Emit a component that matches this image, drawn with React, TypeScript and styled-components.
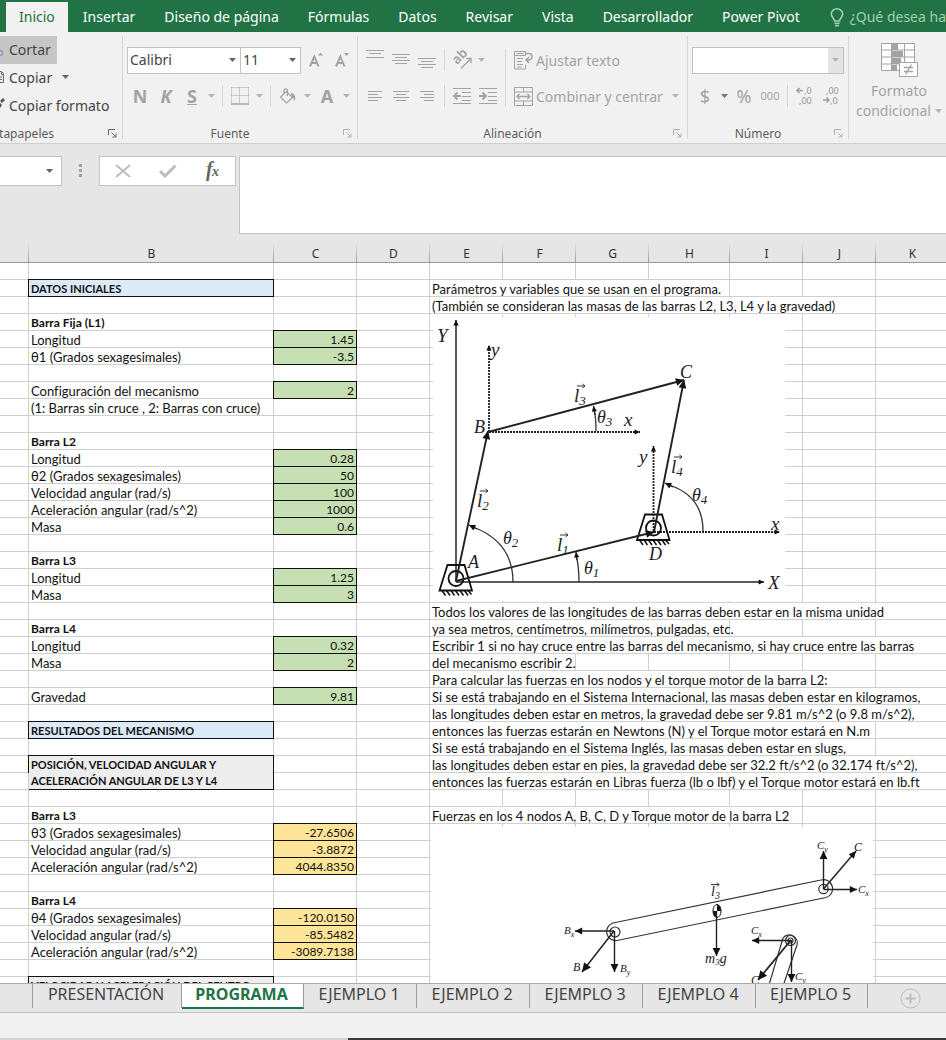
import React from "react";
import styled, { createGlobalStyle, css } from "styled-components";

const GlobalStyle = createGlobalStyle`
  *, *::before, *::after { box-sizing: border-box; }
  html, body { margin: 0; padding: 0; }
  body { background: #e6e6e6; font-family: "Noto Sans", "Open Sans", sans-serif; }
  button, input, select { font: inherit; color: inherit; margin: 0; }
`;

const GREEN = "#217346";
const OFF = "#a3a3a3";
const INK = "#444";

const App = styled.div`
  display: flex;
  flex-direction: column;
  height: 100vh;
  overflow: hidden;
`;

/* ---------- Ribbon tabs ---------- */

const TabStrip = styled.nav`
  display: flex;
  align-items: flex-end;
  gap: 1px;
  height: 32px;
  padding-left: 6px;
  background: ${GREEN};
  overflow: hidden;
  flex: none;
`;

const RibbonTab = styled.button<{ $active?: boolean }>`
  flex: none;
  height: 30px;
  padding: 0 ${(p) => (p.$active ? 13 : 14)}px;
  border: 0;
  font-size: 14px;
  line-height: 28px;
  white-space: nowrap;
  background: ${(p) => (p.$active ? "#f1f1f1" : "transparent")};
  color: ${(p) => (p.$active ? GREEN : "#fff")};
`;

const TellMe = styled.button`
  display: flex;
  align-items: center;
  gap: 6px;
  flex: none;
  height: 30px;
  padding: 0 0 0 15px;
  border: 0;
  background: transparent;
  color: #a3cdb4;
  font-size: 14px;
  line-height: 28px;
  white-space: nowrap;
`;

/* ---------- Ribbon ---------- */

const Ribbon = styled.div`
  display: grid;
  grid-template-columns: 123px 235px 330px 161px minmax(97px, 1fr);
  height: 112px;
  flex: none;
  background: #f1f1f1;
  border-bottom: 1px solid #cfcfcf;
  color: ${INK};
  overflow: hidden;
`;

const Group = styled.section`
  display: flex;
  flex-direction: column;
  position: relative;
  min-width: 0;
  &:not(:last-child)::after {
    content: "";
    position: absolute;
    right: 0;
    top: 4px;
    bottom: 4px;
    width: 1px;
    background: #d5d5d5;
  }
`;

const GroupBody = styled.div<{ $tight?: boolean }>`
  flex: 1;
  padding-top: ${(p) => (p.$tight ? 4 : 10)}px;
`;

const GroupFooter = styled.div`
  display: grid;
  grid-template-columns: 1fr 9px;
  column-gap: 6px;
  align-items: center;
  height: 19px;
  padding-right: 6px;
  font-size: 12px;
  line-height: 16px;
  text-align: center;
  color: #5c5c5c;
`;

const ClippedTitle = styled.div`
  display: flex;
  justify-content: flex-end;
  width: 54px;
  overflow: hidden;
`;

const Launcher = styled.button<{ $on?: boolean }>`
  display: flex;
  padding: 0;
  border: 0;
  background: none;
  color: ${(p) => (p.$on ? "#666" : "#b0b0b0")};
`;

const ClipButton = styled.button<{ $hot?: boolean }>`
  display: flex;
  align-items: center;
  width: ${(p) => (p.$hot ? "57px" : "118px")};
  height: 28px;
  padding: 0 0 2px;
  gap: 4px;
  border: 0;
  background: ${(p) => (p.$hot ? "#c6c6c6" : "transparent")};
  color: ${INK};
  font-size: 14px;
  white-space: nowrap;
  svg { flex: none; }
  span { margin-right: 6px; }
`;

const Row = styled.div`
  display: flex;
  align-items: center;
  height: 36px;
  padding-left: 4px;
`;

const SelectBox = styled.label<{ $w: number; $off?: boolean }>`
  display: grid;
  grid-template-columns: 1fr 15px;
  align-items: center;
  width: ${(p) => p.$w}px;
  height: 27px;
  border: 1px solid #c3c3c3;
  background: #fff;
  & + & { margin-left: -1px; }
  select {
    grid-area: 1 / 1 / 2 / 3;
    appearance: none;
    width: 100%;
    height: 25px;
    padding: 0 2px 2px;
    border: 0;
    background: transparent;
    font-size: 14px;
    color: ${INK};
    opacity: 1;
  }
  span {
    grid-area: 1 / 2 / 2 / 3;
    display: flex;
    align-items: center;
    justify-content: center;
    height: 25px;
    pointer-events: none;
    background: ${(p) => (p.$off ? "#e4e4e4" : "transparent")};
  }
`;

const Tool = styled.button<{ $w?: number; $small?: boolean }>`
  display: flex;
  align-items: center;
  justify-content: center;
  flex: none;
  width: ${(p) => p.$w ?? 26}px;
  height: 26px;
  padding: 0;
  border: 0;
  background: none;
  color: ${OFF};
  font-size: ${(p) => (p.$small ? 11 : 18)}px;
  line-height: 24px;
`;

const WideTool = styled.button`
  display: flex;
  align-items: center;
  gap: 3px;
  height: 36px;
  padding: 0;
  border: 0;
  background: none;
  color: ${OFF};
  font-size: 14px;
  white-space: nowrap;
`;

const Rule = styled.i<{ $tall?: boolean }>`
  flex: none;
  width: 1px;
  height: ${(p) => (p.$tall ? 58 : 22)}px;
  margin: 0 4px;
  background: #d5d5d5;
`;

const Split = styled.div`
  display: flex;
  align-items: center;
`;

const BigTool = styled.button`
  display: flex;
  flex-direction: column;
  align-items: center;
  width: 100px;
  padding: 0;
  border: 0;
  background: none;
  color: ${OFF};
  font-size: 14px;
  line-height: 20px;
  svg { flex: none; }
  > svg { margin-bottom: 3px; }
  span { display: flex; align-items: center; gap: 4px; white-space: nowrap; }
`;

/* ---------- Formula bar ---------- */

const FormulaBar = styled.div`
  display: flex;
  align-items: flex-start;
  flex: none;
  height: 97px;
  padding-top: 12px;
`;

const NameBox = styled.label`
  display: flex;
  align-items: center;
  width: 62px;
  height: 30px;
  padding-right: 8px;
  border: 1px solid #c3c3c3;
  border-left: 0;
  background: #fff;
  input { flex: 1; min-width: 0; border: 0; padding: 0; background: none; }
`;

const Grip = styled.div`
  display: flex;
  justify-content: center;
  align-items: center;
  width: 37px;
  height: 30px;
`;

const FxBox = styled.div`
  display: flex;
  align-items: center;
  justify-content: space-around;
  width: 137px;
  height: 30px;
  border: 1px solid #c3c3c3;
  background: #fff;
`;

const FormulaInput = styled.textarea`
  flex: 1;
  min-width: 0;
  height: 78px;
  margin-left: 3px;
  padding: 4px;
  border: 1px solid #c3c3c3;
  border-right: 0;
  background: #fff;
  resize: none;
`;

/* ---------- Worksheet ---------- */

const SheetView = styled.main`
  flex: 1;
  min-height: 0;
  overflow: hidden;
  background: #fff;
`;

const Sheet = styled.table`
  width: 100%;
  min-width: 949px;
  table-layout: fixed;
  border-collapse: separate;
  border-spacing: 0;
  font-family: Lato, "Noto Sans", sans-serif;
  font-size: 13px;
  font-variant-ligatures: none;
  line-height: 14px;
  color: #111;
`;

const ColumnHead = styled.th`
  height: 22px;
  padding: 5px 0 0;
  border-bottom: 1px solid #9b9b9b;
  background: linear-gradient(to bottom, #e6e6e6 10%, #9b9b9b) right / 1px 100% no-repeat #e6e6e6;
  font: 12px/16px "Noto Sans", sans-serif;
  color: #333;
`;

const Cell = styled.td`
  height: 17px;
  padding: 2px 2px 0;
  border-right: 1px solid #d0d0d0;
  border-bottom: 1px solid #d0d0d0;
  white-space: nowrap;
`;

const boxed = css`
  border-color: #111;
  box-shadow: 0 -1px 0 #111, -1px 0 0 #111, -1px -1px 0 #111;
`;

const HeadingCell = styled(Cell)<{ $fill: string; $double: boolean }>`
  ${boxed}
  background: ${(p) => p.$fill};
  font-size: 11px;
  font-weight: 700;
  white-space: pre;
  ${(p) => p.$double && "padding-top: 1px; line-height: 16px;"}
`;

const LabelCell = styled(Cell)<{ $bold?: boolean }>`
  ${(p) => p.$bold && "font-weight: 700; font-size: 12px;"}
`;

const ValueCell = styled(Cell)<{ $fill: string }>`
  ${boxed}
  background: ${(p) => p.$fill};
  font-size: 12px;
  text-align: right;
`;

const AnchorCell = styled(Cell)`
  position: relative;
`;

const Picture = styled.svg<{ $left: number }>`
  position: absolute;
  z-index: 1;
  top: 3px;
  left: ${(p) => p.$left}px;
  background: #fff;
  font-family: "Liberation Serif", serif;
  font-style: italic;
  text { fill: #222; }
`;

/* ---------- Sheet tabs and status bar ---------- */

const SheetTabs = styled.nav`
  display: flex;
  align-items: flex-start;
  flex: none;
  height: 30px;
  padding-left: 32px;
  border-top: 1px solid #ababab;
  border-bottom: 1px solid #c3c3c3;
  background: #e6e6e6;
`;

const SheetTab = styled.button<{ $active?: boolean; $w: number }>`
  flex: none;
  width: ${(p) => p.$w}px;
  height: 24px;
  padding: 0 2px 4px 0;
  border: 0;
  border-right: 1px solid #9b9b9b;
  font-size: 16px;
  line-height: 20px;
  text-align: center;
  color: ${INK};
  background: transparent;
  &:first-child { border-left: 1px solid #9b9b9b; }
  ${(p) =>
    p.$active &&
    css`
      height: 25px;
      padding-bottom: 3px;
      background: #fff;
      color: ${GREEN};
      font-weight: 700;
      border-bottom: 2px solid ${GREEN};
    `}
`;

const AddSheet = styled.button`
  display: flex;
  margin: 4px 0 0 32px;
  padding: 0;
  border: 0;
  background: none;
`;

const StatusBar = styled.footer`
  display: flex;
  align-items: flex-end;
  flex: none;
  height: 27px;
  background: #f1f1f1;
  &::before { content: ""; width: 348px; height: 2px; background: #cdd3d6; }
  &::after { content: ""; flex: 1; height: 2px; background: #3a3a3a; }
`;

/* ---------- Icons ---------- */

const Caret = ({ color = "#b5b5b5" }: { color?: string }) => (
  <svg width="7" height="4" viewBox="0 0 7 4" aria-hidden="true">
    <path d="M0 0h7L3.500 4z" fill={color} />
  </svg>
);

const Lines = ({ rows }: { rows: [number, number, number][] }) => (
  <svg width="20" height="22" viewBox="0 0 20 22" stroke={OFF} aria-hidden="true">
    {rows.map(([x1, x2, y]) => (
      <path key={y} d={`M${x1} ${y + 0.5}H${x2}`} />
    ))}
  </svg>
);

const LauncherIcon = () => (
  <svg width="9" height="9" viewBox="0 0 9 9" fill="none" stroke="currentColor" aria-hidden="true">
    <path d="M.5 6V.5H7M3.500 3.500l4 4M8 4.500V8H4.500" />
  </svg>
);

const Bulb = () => (
  <svg width="14" height="19" viewBox="0 0 14 19" fill="none" stroke="currentColor" strokeWidth="1.600" aria-hidden="true">
    <path d="M4.500 13c0-2.500-3.200-3.700-3.200-7a5.700 5.200 0 0 1 11.400 0c0 3.300-3.200 4.500-3.200 7zM4.500 15.400h5M5 17.800h4" />
  </svg>
);

const Scissors = () => (
  <svg width="5" height="14" viewBox="0 0 5 14" fill="none" stroke="#7d9cc0" strokeWidth="1.300" aria-hidden="true">
    <circle cx="0" cy="11" r="2.500" />
  </svg>
);

const CopyIcon = () => (
  <svg width="5" height="16" viewBox="0 0 5 16" fill="none" stroke="#666" aria-hidden="true">
    <path d="M0 2.500h1.500l2 2v9H0M1.500 2.500v3h2M0 8h2M0 10.500h2" />
  </svg>
);

const Brush = () => (
  <svg width="5" height="16" viewBox="0 0 5 16" fill="#555" aria-hidden="true">
    <path d="M0 4l3-3 2 2-3 3zM0 6l2 2-2 3z" />
  </svg>
);

const GrowA = ({ down }: { down?: boolean }) => (
  <svg width="16" height="18" viewBox="0 0 16 18" aria-hidden="true">
    <path d="M1 15.500L5.300 5.500 9.500 15.500M2.500 12h5.600" fill="none" stroke={OFF} strokeWidth="1.900" />
    <path d={down ? "M9 2h5L11.500 5z" : "M9 4.500h5L11.500 1.500z"} fill={OFF} />
  </svg>
);

const Borders = () => (
  <svg width="18" height="18" viewBox="0 0 18 18" fill="none" stroke={OFF} aria-hidden="true">
    <path d="M.5.5h17M.5 8.500h17M.5.5v16M8.500.5v16M17.500.5v16" strokeDasharray="1 1" />
    <path d="M0 17h18" strokeWidth="1.500" />
  </svg>
);

const Bucket = () => (
  <svg width="18" height="17" viewBox="0 0 18 17" fill="none" stroke={OFF} strokeWidth="1.200" aria-hidden="true">
    <path d="M7.500 3.500l6 6-6 5.500-6-6zM5 7V2.500a1.700 1.700 0 0 1 3.400 0V8" />
    <path d="M12 5c3.500.5 5 3.500 3.800 8-1-2.500-2-3.500-3-3.500z" fill={OFF} stroke="none" />
  </svg>
);

const Orientation = () => (
  <svg width="20" height="20" viewBox="0 0 20 20" overflow="visible" aria-hidden="true">
    <text x="5" y="15" fontSize="13" fill={OFF} fontWeight="600" transform="rotate(-45 5 15)">ab</text>
    <path d="M9 18.500L18.500 9M19 13V8.500h-4.500" fill="none" stroke={OFF} strokeWidth="1.400" />
  </svg>
);

const Indent = ({ out }: { out?: boolean }) => (
  <svg width="20" height="18" viewBox="0 0 20 18" fill="none" stroke={OFF} aria-hidden="true">
    <path d="M1 1.500h18M10 5.500h9M10 9.500h9M10 13.500h9M1 16.500h18" />
    <path d={out ? "M9 9H2.500M5.500 5.500L2 9l3.500 3.500" : "M1 9h6.500M4.500 5.500L8 9l-3.500 3.500"} strokeWidth="1.900" />
  </svg>
);

const WrapIcon = () => (
  <svg width="19" height="19" viewBox="0 0 19 19" fill="none" stroke={OFF} aria-hidden="true">
    <path d="M.5.5h11v4H.5zM.5 4.500V18h11v-4.500M2.500 2.500h7M3 7.500h6M3 10.500h5M3 13.500h6M3 16h5" />
    <path d="M11.500 2.500h4q2.500 0 2.500 3t-3 3.500h-2.500M15 6l-3 3 3 3" strokeWidth="1.400" />
  </svg>
);

const MergeIcon = () => (
  <svg width="19" height="19" viewBox="0 0 19 19" fill="none" stroke={OFF} aria-hidden="true">
    <path d="M.5.5h18v18H.5zM.5 5h18M.5 14h18M9.500.5V5M9.500 14v4.500" />
    <path d="M3 9.500h13M5.500 7L3 9.500 5.500 12M13.500 7L16 9.500 13.500 12" strokeWidth="1.300" />
  </svg>
);

const Decimals = ({ less }: { less?: boolean }) => (
  <svg width="18" height="20" viewBox="0 0 18 20" overflow="visible" fill="#979797" fontSize="9" aria-hidden="true">
    <text x={less ? 4 : 8} y="8">{less ? ",00" : ",0"}</text>
    <text x={less ? 8 : 3} y="18">{less ? ",0" : ",00"}</text>
    <path
      d={less ? "M1 14h6M4.500 11.500L7 14l-2.500 2.500" : "M7 4.500H1M3.500 2L1 4.500 3.500 7"}
      fill="none"
      stroke={OFF}
      strokeWidth="1.700"
    />
  </svg>
);

const ConditionalIcon = () => (
  <svg width="38" height="36" viewBox="0 0 38 36" fill="none" stroke={OFF} aria-hidden="true">
    <path d="M1.500 1.500h33v27h-33zM1.500 8h33M1.500 15h33M1.500 22h33M11.500 1v27M24.500 1v27" fill="#fff" />
    <path d="M12 1h6v7h-6zM12 9h11v6H12zM12 16h9v6h-9zM12 23h5v6h-5z" fill={OFF} stroke="none" />
    <path d="M19.500 20.500h18v14h-18z" fill="#fff" />
    <path d="M24 25.500h9M24 29.500h9M31.500 22.500l-6 10" strokeWidth="1.300" />
  </svg>
);

/* ---------- Drawings ---------- */

type Pt = [number, number];

const Vector = ({ from, to, w = 1, head = 6, dash }: { from: Pt; to: Pt; w?: number; head?: number; dash?: boolean }) => {
  const a = Math.atan2(to[1] - from[1], to[0] - from[0]);
  const wing = (s: number) =>
    `${to[0] - head * Math.cos(a + s)},${to[1] - head * Math.sin(a + s)}`;
  return (
    <g>
      <path d={`M${from}L${to}`} stroke="#222" strokeWidth={w} strokeDasharray={dash ? "2 1" : undefined} />
      <polygon points={`${to} ${wing(0.45)} ${wing(-0.45)}`} fill="#111" />
    </g>
  );
};

const Symbol = ({ x, y, size = 19, sub, bar, children }: { x: number; y: number; size?: number; sub?: string; bar?: boolean; children: string }) => (
  <g>
    <text x={x} y={y} fontSize={size}>
      {children}
      {sub && <tspan fontSize={Math.round(size * 0.7)} dy={3}>{sub}</tspan>}
    </text>
    {bar && <path d={`M${x + 3} ${y - size + 3}h8m-2.500-2l2.500 2-2.500 2`} fill="none" stroke="#333" />}
  </g>
);

const Pivot = ({ x, y }: { x: number; y: number }) => (
  <g transform={`translate(${x} ${y})`} fill="none" stroke="#111" strokeWidth="1.800">
    <path d="M-8.500-13.500H8.500L16 12H-16.500z" />
    <circle r="7.500" />
    <path d="M-14 12l3.500 5M-9.500 12l3.500 5M-5 12l3.500 5M-.5 12L3 17M4 12l3.500 5M8.500 12l3.500 5M12 12l3.500 4" strokeWidth="1.500" />
  </g>
);

const Mechanism = () => (
  <Picture $left={3} width="352" height="284" viewBox="433 317 352 284" role="img" aria-label="Mecanismo de cuatro barras">
    <Vector from={[456, 582]} to={[456, 320]} w={1.5} />
    <Vector from={[456, 582]} to={[764, 582]} w={1.3} />
    <Vector from={[489, 432]} to={[489, 345]} w={1.800} dash />
    <Vector from={[489, 432]} to={[640, 432]} w={1.800} dash />
    <Vector from={[653.500, 531]} to={[653.500, 446]} w={1.800} dash />
    <Vector from={[654, 532]} to={[780, 532]} w={1.800} dash />
    <Pivot x={456} y={578.500} />
    <Pivot x={653.500} y={528} />
    <Vector from={[456, 581]} to={[488, 431]} w={1.900} head={9} />
    <Vector from={[488, 432]} to={[684, 380]} w={1.900} head={9} />
    <Vector from={[654, 532]} to={[684, 380]} w={1.900} head={9} />
    <Vector from={[456, 581]} to={[654, 532]} w={1.900} head={9} />
    <g fill="none" stroke="#333" strokeWidth="1.300">
      <path d="M596 431q0-14-2-22M579 582q0-16-3-27M513 582q0-40-40-55M703 531q0-35-34-46" />
    </g>
    <Vector from={[595, 415]} to={[593.500, 406]} w={1.3} />
    <Vector from={[577, 560]} to={[576, 552]} w={1.3} />
    <Vector from={[477, 529]} to={[469, 525]} w={1.3} head={7} />
    <Vector from={[673, 487]} to={[665, 483]} w={1.3} head={7} />
    <Symbol x={437} y={342}>Y</Symbol>
    <Symbol x={768} y={589}>X</Symbol>
    <Symbol x={491} y={356}>y</Symbol>
    <Symbol x={624} y={426}>x</Symbol>
    <Symbol x={639} y={463}>y</Symbol>
    <Symbol x={771} y={530}>x</Symbol>
    <Symbol x={468} y={568} size={18}>A</Symbol>
    <Symbol x={474} y={433} size={18}>B</Symbol>
    <Symbol x={680} y={378} size={18}>C</Symbol>
    <Symbol x={649} y={560} size={18}>D</Symbol>
    <Symbol x={557} y={551} sub="1" bar>l</Symbol>
    <Symbol x={477} y={507} sub="2" bar>l</Symbol>
    <Symbol x={574} y={402} sub="3" bar>l</Symbol>
    <Symbol x={671} y={473} sub="4" bar>l</Symbol>
    <Symbol x={584} y={574} size={18} sub="1">θ</Symbol>
    <Symbol x={503} y={544} size={18} sub="2">θ</Symbol>
    <Symbol x={597} y={423} size={18} sub="3">θ</Symbol>
    <Symbol x={692} y={501} size={18} sub="4">θ</Symbol>
  </Picture>
);

const Forces = () => (
  <Picture $left={1} width="442" height="240" viewBox="431 827 442 240" role="img" aria-label="Fuerzas en los nodos">
    <g fill="none" stroke="#333" strokeWidth="1.200">
      <path d="M613 923L821 880A9 9 0 0 1 826 897.500L617 940.500A9 9 0 0 1 613 923z" />
      <circle cx="615" cy="932" r="5" />
      <circle cx="823.500" cy="889" r="4.700" />
      <path d="M766 995L783 938A8 8 0 0 1 797 945L780 995" />
      <circle cx="790.500" cy="940.500" r="5" />
      <circle cx="790.500" cy="940.500" r="2.500" />
    </g>
    <Vector from={[614, 931]} to={[575, 931]} w={1.400} head={8} />
    <Vector from={[614, 931]} to={[582, 972]} w={1.500} head={10} />
    <Vector from={[614.500, 931]} to={[614.500, 972]} w={1.400} head={9} />
    <ellipse cx="717" cy="911" rx="4" ry="6.500" fill="#fff" stroke="#111" />
    <path d="M717 911V904.500A4 6.500 0 0 1 721 911zM717 911V917.500A4 6.500 0 0 1 713 911z" fill="#111" />
    <Vector from={[716.500, 911]} to={[716.500, 956]} w={1.400} head={9} />
    <Vector from={[823.500, 889]} to={[823.500, 851]} w={1.400} head={9} />
    <Vector from={[823.500, 889]} to={[856, 851]} w={1.500} head={8} />
    <Vector from={[823.500, 889.500]} to={[857, 889.500]} w={1.400} head={8} />
    <Vector from={[791, 940.500]} to={[752, 940.500]} w={1.400} head={8} />
    <Vector from={[791, 940]} to={[758, 980]} w={1.800} head={10} />
    <Vector from={[791.500, 940]} to={[791.500, 982]} w={1.400} head={9} />
    <Symbol x={564} y={934} size={11} sub="x">B</Symbol>
    <Symbol x={573} y={971} size={12}>B</Symbol>
    <Symbol x={620} y={972} size={11} sub="y">B</Symbol>
    <Symbol x={711} y={896} size={14} sub="3">l</Symbol>
    <path d="M711 884.500h8m-2-2l2 2-2 2" fill="none" stroke="#333" />
    <text x="705" y="963" fontSize="14">
      m<tspan fontSize="9" dy="2">3</tspan><tspan dy="-2">g</tspan>
    </text>
    <Symbol x={817} y={849} size={11} sub="y">C</Symbol>
    <Symbol x={854} y={851} size={12}>C</Symbol>
    <Symbol x={858} y={893} size={11} sub="x">C</Symbol>
    <Symbol x={751} y={934} size={11} sub="x">C</Symbol>
    <Symbol x={795} y={980} size={11} sub="y">C</Symbol>
    <Symbol x={751} y={984} size={12}>C</Symbol>
  </Picture>
);

/* ---------- Data ---------- */

const INPUT = "#c6dfb3";
const RESULT = "#ffe598";

interface LeftEntry {
  label: string;
  bold?: boolean;
  heading?: string;
  rows?: number;
  value?: string;
  fill?: string;
}

const left: Record<number, LeftEntry> = {
  1: { label: "DATOS INICIALES", heading: "#dce9f6" },
  3: { label: "Barra Fija (L1)", bold: true },
  4: { label: "Longitud", value: "1.45", fill: INPUT },
  5: { label: "θ1 (Grados sexagesimales)", value: "-3.5", fill: INPUT },
  7: { label: "Configuración del mecanismo", value: "2", fill: INPUT },
  8: { label: "(1: Barras sin cruce , 2: Barras con cruce)" },
  10: { label: "Barra L2", bold: true },
  11: { label: "Longitud", value: "0.28", fill: INPUT },
  12: { label: "θ2 (Grados sexagesimales)", value: "50", fill: INPUT },
  13: { label: "Velocidad angular (rad/s)", value: "100", fill: INPUT },
  14: { label: "Aceleración angular (rad/s^2)", value: "1000", fill: INPUT },
  15: { label: "Masa", value: "0.6", fill: INPUT },
  17: { label: "Barra L3", bold: true },
  18: { label: "Longitud", value: "1.25", fill: INPUT },
  19: { label: "Masa", value: "3", fill: INPUT },
  21: { label: "Barra L4", bold: true },
  22: { label: "Longitud", value: "0.32", fill: INPUT },
  23: { label: "Masa", value: "2", fill: INPUT },
  25: { label: "Gravedad", value: "9.81", fill: INPUT },
  27: { label: "RESULTADOS DEL MECANISMO", heading: "#dce9f6" },
  29: { label: "POSICIÓN, VELOCIDAD ANGULAR Y\nACELERACIÓN ANGULAR DE L3 Y L4", heading: "#ededed", rows: 2 },
  32: { label: "Barra L3", bold: true },
  33: { label: "θ3 (Grados sexagesimales)", value: "-27.6506", fill: RESULT },
  34: { label: "Velocidad angular (rad/s)", value: "-3.8872", fill: RESULT },
  35: { label: "Aceleración angular (rad/s^2)", value: "4044.8350", fill: RESULT },
  37: { label: "Barra L4", bold: true },
  38: { label: "θ4 (Grados sexagesimales)", value: "-120.0150", fill: RESULT },
  39: { label: "Velocidad angular (rad/s)", value: "-85.5482", fill: RESULT },
  40: { label: "Aceleración angular (rad/s^2)", value: "-3089.7138", fill: RESULT },
  42: { label: "VELOCIDAD Y ACELERACIÓN DEL CENTRO\nDE MASA", heading: "#ededed", rows: 2 },
};

/* Each note spills over the given number of columns, starting at E. */
const notes: Record<number, [string, number]> = {
  1: ["Parámetros y variables que se usan en el programa.", 4],
  2: ["(También se consideran las masas de las barras L2, L3, L4 y la gravedad)", 6],
  20: ["Todos los valores de las longitudes de las barras deben estar en la misma unidad", 7],
  21: ["ya sea metros, centímetros, milímetros, pulgadas, etc.", 4],
  22: ["Escribir 1 si no hay cruce entre las barras del mecanismo, si hay cruce entre las barras", 7],
  23: ["del mecanismo escribir 2.", 2],
  24: ["Para calcular las fuerzas en los nodos y el torque motor de la barra L2:", 6],
  25: ["Si se está trabajando en el Sistema Internacional, las masas deben estar en kilogramos,", 7],
  26: ["las longitudes deben estar en metros, la gravedad debe ser 9.81 m/s^2 (o 9.8 m/s^2),", 7],
  27: ["entonces las fuerzas estarán en Newtons (N) y el Torque motor estará en N.m", 6],
  28: ["Si se está trabajando en el Sistema Inglés, las masas deben estar en slugs,", 6],
  29: ["las longitudes deben estar en pies, la gravedad debe ser 32.2 ft/s^2 (o 32.174 ft/s^2),", 7],
  30: ["entonces las fuerzas estarán en Libras fuerza (lb o lbf) y el Torque motor estará en lb.ft", 7],
  32: ["Fuerzas en los 4 nodos A, B, C, D y Torque motor de la barra L2", 5],
};

const pictures: Record<number, React.ReactNode> = { 3: <Mechanism />, 33: <Forces /> };

const columns: [string, number?][] = [
  ["", 29], ["B", 245], ["C", 83], ["D", 73], ["E", 73], ["F", 73],
  ["G", 73], ["H", 81], ["I", 73], ["J", 73], ["K"],
];

const SheetRow = ({ n }: { n: number }) => {
  const entry = left[n];
  const covered = left[n - 1]?.rows === 2;
  const [note, span] = notes[n] ?? ["", 1];
  return (
    <tr>
      <Cell />
      {!covered &&
        (entry?.heading ? (
          <HeadingCell $fill={entry.heading} $double={entry.rows === 2} rowSpan={entry.rows}>{entry.label}</HeadingCell>
        ) : (
          <LabelCell $bold={entry?.bold}>{entry?.label}</LabelCell>
        ))}
      {entry?.value ? <ValueCell $fill={entry.fill!}>{entry.value}</ValueCell> : <Cell />}
      <Cell />
      {pictures[n] ? <AnchorCell>{pictures[n]}</AnchorCell> : <Cell colSpan={span}>{note}</Cell>}
      {Array.from({ length: 7 - span }, (_, i) => (
        <Cell key={i} />
      ))}
    </tr>
  );
};

const ribbonTabs = ["Inicio", "Insertar", "Diseño de página", "Fórmulas", "Datos", "Revisar", "Vista", "Desarrollador", "Power Pivot"];

const sheetTabs: [string, number][] = [
  ["PRESENTACIÓN", 150], ["PROGRAMA", 122], ["EJEMPLO 1", 113], ["EJEMPLO 2", 113],
  ["EJEMPLO 3", 113], ["EJEMPLO 4", 113], ["EJEMPLO 5", 112],
];

const Footer = ({ title }: { title: string }) => (
  <GroupFooter>
    <div>{title}</div>
    <Launcher aria-label={`Opciones de ${title}`}><LauncherIcon /></Launcher>
  </GroupFooter>
);

export default function ExcelWindow() {
  return (
    <App>
      <GlobalStyle />
      <TabStrip>
        {ribbonTabs.map((t, i) => (
          <RibbonTab key={t} $active={i === 0}>{t}</RibbonTab>
        ))}
        <TellMe><Bulb />¿Qué desea hacer?</TellMe>
      </TabStrip>

      <Ribbon>
        <Group>
          <GroupBody $tight>
            <ClipButton $hot><Scissors />Cortar</ClipButton>
            <ClipButton><CopyIcon /><span>Copiar</span><Caret color="#666" /></ClipButton>
            <ClipButton><Brush />Copiar formato</ClipButton>
          </GroupBody>
          <GroupFooter>
            <ClippedTitle><span>Portapapeles</span></ClippedTitle>
            <Launcher $on aria-label="Opciones del portapapeles"><LauncherIcon /></Launcher>
          </GroupFooter>
        </Group>

        <Group>
          <GroupBody>
            <Row>
              <SelectBox $w={114}>
                <select aria-label="Fuente"><option>Calibri</option></select>
                <span><Caret color="#666" /></span>
              </SelectBox>
              <SelectBox $w={61}>
                <select aria-label="Tamaño de fuente"><option>11</option></select>
                <span><Caret color="#666" /></span>
              </SelectBox>
              <Tool $w={32} aria-label="Aumentar tamaño"><GrowA /></Tool>
              <Tool $w={20} aria-label="Disminuir tamaño"><GrowA down /></Tool>
            </Row>
            <Row>
              <Tool aria-label="Negrita"><b>N</b></Tool>
              <Tool aria-label="Cursiva"><b><em>K</em></b></Tool>
              <Tool aria-label="Subrayado"><b><u>S</u></b></Tool>
              <Tool $w={13} aria-label="Más subrayados"><Caret /></Tool>
              <Rule />
              <Tool aria-label="Bordes"><Borders /></Tool>
              <Tool $w={13} aria-label="Más bordes"><Caret /></Tool>
              <Rule />
              <Tool aria-label="Relleno"><Bucket /></Tool>
              <Tool $w={13} aria-label="Más rellenos"><Caret /></Tool>
              <Tool aria-label="Color de fuente"><b>A</b></Tool>
              <Tool $w={13} aria-label="Más colores"><Caret /></Tool>
            </Row>
          </GroupBody>
          <Footer title="Fuente" />
        </Group>

        <Group>
          <GroupBody>
            <Split>
              <div>
                <Row>
                  <Tool aria-label="Alinear arriba"><Lines rows={[[1, 19, 1], [4, 16, 4], [1, 19, 8]]} /></Tool>
                  <Tool aria-label="Alinear en medio"><Lines rows={[[1, 19, 5], [4, 16, 8], [1, 19, 11], [4, 16, 14]]} /></Tool>
                  <Tool aria-label="Alinear abajo"><Lines rows={[[1, 19, 9], [4, 16, 12], [1, 19, 15], [4, 16, 18]]} /></Tool>
                  <Rule />
                  <Tool aria-label="Orientación"><Orientation /></Tool>
                  <Tool $w={13} aria-label="Más orientaciones"><Caret /></Tool>
                </Row>
                <Row>
                  <Tool aria-label="Alinear a la izquierda"><Lines rows={[[3, 17, 6], [3, 13, 9], [3, 17, 12], [3, 13, 15]]} /></Tool>
                  <Tool aria-label="Centrar"><Lines rows={[[2, 18, 6], [5, 15, 9], [2, 18, 12], [5, 15, 15]]} /></Tool>
                  <Tool aria-label="Alinear a la derecha"><Lines rows={[[3, 17, 6], [7, 17, 9], [3, 17, 12], [7, 17, 15]]} /></Tool>
                  <Rule />
                  <Tool aria-label="Disminuir sangría"><Indent out /></Tool>
                  <Tool aria-label="Aumentar sangría"><Indent /></Tool>
                </Row>
              </div>
              <Rule $tall />
              <div>
                <Row><WideTool><WrapIcon />Ajustar texto</WideTool></Row>
                <Row>
                  <WideTool><MergeIcon />Combinar y centrar</WideTool>
                  <Tool aria-label="Más opciones de combinar"><Caret /></Tool>
                </Row>
              </div>
            </Split>
          </GroupBody>
          <Footer title="Alineación" />
        </Group>

        <Group>
          <GroupBody>
            <Row>
              <SelectBox $w={152} $off>
                <select aria-label="Formato de número" disabled><option></option></select>
                <span><Caret /></span>
              </SelectBox>
            </Row>
            <Row>
              <Tool aria-label="Moneda">$</Tool>
              <Tool $w={13} aria-label="Más monedas"><Caret color="#777" /></Tool>
              <Tool aria-label="Porcentaje">%</Tool>
              <Tool $small aria-label="Estilo millares">000</Tool>
              <Rule />
              <Tool aria-label="Aumentar decimales"><Decimals /></Tool>
              <Tool aria-label="Disminuir decimales"><Decimals less /></Tool>
            </Row>
          </GroupBody>
          <Footer title="Número" />
        </Group>

        <Group>
          <GroupBody>
            <BigTool>
              <ConditionalIcon />
              <span>Formato</span>
              <span>condicional<Caret /></span>
            </BigTool>
          </GroupBody>
        </Group>
      </Ribbon>

      <FormulaBar>
        <NameBox>
          <input aria-label="Cuadro de nombres" />
          <Caret color="#666" />
        </NameBox>
        <Grip>
          <svg width="3" height="14" viewBox="0 0 3 14" fill="#a0a0a0"><path d="M0 0h3v3H0zM0 5h3v3H0zM0 10h3v3H0z" /></svg>
        </Grip>
        <FxBox>
          <Tool aria-label="Cancelar">
            <svg width="16" height="14" viewBox="0 0 16 14" fill="none" stroke="#bdbdbd" strokeWidth="2"><path d="M1 1l14 12M15 1L1 13" /></svg>
          </Tool>
          <Tool aria-label="Introducir">
            <svg width="18" height="14" viewBox="0 0 18 14" fill="none" stroke="#bdbdbd" strokeWidth="3"><path d="M1 7l5 5L16.500 1.500" /></svg>
          </Tool>
          <Tool aria-label="Insertar función">
            <svg width="20" height="22" viewBox="0 0 20 22" fill="#666" fontFamily="Liberation Serif, serif" fontStyle="italic" fontWeight="700">
              <text x="3" y="16" fontSize="20">f</text>
              <text x="9" y="16" fontSize="14">x</text>
            </svg>
          </Tool>
        </FxBox>
        <FormulaInput aria-label="Barra de fórmulas" />
      </FormulaBar>

      <SheetView>
        <Sheet>
          <colgroup>
            {columns.map(([c, w]) => (
              <col key={c} width={w} />
            ))}
          </colgroup>
          <thead>
            <tr>
              {columns.map(([c]) => (
                <ColumnHead key={c} scope="col">{c}</ColumnHead>
              ))}
            </tr>
          </thead>
          <tbody>
            {Array.from({ length: 48 }, (_, n) => (
              <SheetRow key={n} n={n} />
            ))}
          </tbody>
        </Sheet>
      </SheetView>

      <SheetTabs>
        {sheetTabs.map(([t, w], i) => (
          <SheetTab key={t} $w={w} $active={i === 1}>{t}</SheetTab>
        ))}
        <AddSheet aria-label="Hoja nueva">
          <svg width="21" height="21" viewBox="0 0 21 21" fill="none" stroke="#bdbdbd">
            <circle cx="10.500" cy="10.500" r="9.500" />
            <path d="M10.500 5.500v10M5.500 10.500h10" strokeWidth="2" />
          </svg>
        </AddSheet>
      </SheetTabs>
      <StatusBar />
    </App>
  );
}
